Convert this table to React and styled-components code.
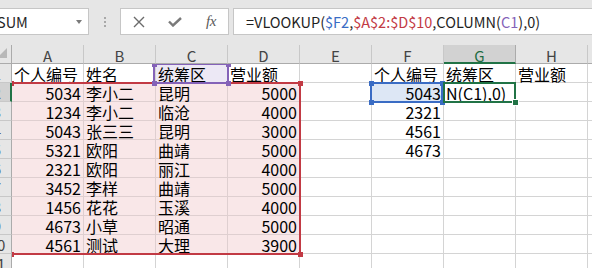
import React from 'react';
import styled, { createGlobalStyle } from 'styled-components';

const Global = createGlobalStyle`
  html, body { margin: 0; padding: 0; background: #fff; }
  body { font-family: "Noto Sans CJK SC", "Liberation Sans", sans-serif; }
`;

const Frame = styled.div`
  width: 592px;
  height: 268px;
  overflow: hidden;
  background: #e6e6e6;
  display: flex;
  flex-direction: column;
`;

const FormulaRow = styled.div`
  height: 45px;
  flex: none;
  box-sizing: border-box;
  padding-top: 8px;
  display: flex;
  align-items: flex-start;
`;

const NameBox = styled.div`
  flex: none;
  margin-left: -11px;
  width: 100px;
  height: 27px;
  box-sizing: border-box;
  background: #fff;
  border: 1px solid #c6c6c6;
  display: flex;
  align-items: center;
  padding: 0 6px 0 7px;
  font-size: 14.5px;
  color: #262626;
`;

const Caret = styled.span`
  margin-left: auto;
  width: 0;
  height: 0;
  border-left: 3.5px solid transparent;
  border-right: 3.5px solid transparent;
  border-top: 4px solid #7a7a7a;
`;

const Grip = styled.div`
  flex: none;
  width: 31px;
  height: 27px;
  display: flex;
  flex-direction: column;
  align-items: center;
  justify-content: center;
  gap: 2px;
`;

const GripDot = styled.span`
  width: 2px;
  height: 2px;
  background: #a8a8a8;
`;

const FxBox = styled.div`
  flex: none;
  width: 109px;
  height: 27px;
  box-sizing: border-box;
  background: #fff;
  border: 1px solid #c6c6c6;
  display: grid;
  grid-template-columns: repeat(3, 36px);
  align-items: center;
  justify-items: center;
`;

const FxLabel = styled.span`
  font-family: "Liberation Serif", "DejaVu Serif", serif;
  font-style: italic;
  font-size: 15px;
  color: #5a5a5a;
  letter-spacing: -0.5px;
`;

const FormulaInput = styled.div`
  flex: none;
  margin-left: 4px;
  width: 420px;
  height: 27px;
  box-sizing: border-box;
  background: #fff;
  border: 1px solid #c6c6c6;
  border-right: none;
  display: flex;
  align-items: center;
  padding-left: 12px;
  font-size: 14.5px;
  color: #1f1f1f;
  white-space: nowrap;
`;

const Ref = styled.span`
  color: ${p => p.$c};
`;

const Sheet = styled.div`
  position: relative;
  flex: none;
  display: grid;
  grid-template-columns: 12px repeat(9, 72px);
  grid-auto-rows: 19px;
  width: 660px;
  background: #fff;
`;

const Corner = styled.div`
  position: relative;
  z-index: 3;
  box-sizing: border-box;
  background: #e6e6e6;
  border-right: 1px solid #ababab;
  border-bottom: 1px solid #ababab;
  overflow: hidden;
`;

const ColHead = styled.div`
  position: relative;
  z-index: 3;
  box-sizing: border-box;
  background: ${p => (p.$active ? '#d2d2d2' : '#e6e6e6')};
  border-right: 1px solid ${p => (p.$active ? '#ababab' : '#c8c8c8')};
  border-bottom: ${p => (p.$active ? '2px solid #217346' : '1px solid #ababab')};
  text-align: center;
  font-size: 15px;
  line-height: 21px;
  color: ${p => (p.$active ? '#1e6b41' : '#444')};
`;

const RowHead = styled.div`
  position: relative;
  z-index: 3;
  box-sizing: border-box;
  background: ${p => (p.$active ? '#d2d2d2' : '#e6e6e6')};
  border-right: ${p => (p.$active ? '2px solid #217346' : '1px solid #ababab')};
  border-bottom: 1px solid #c8c8c8;
  overflow: hidden;
  font-size: 15px;
  line-height: 20px;
  color: #444;
`;

const RowNum = styled.span`
  display: block;
  width: 30px;
  margin-left: -18px;
  text-align: center;
`;

const tints = {
  pink: '#f9e7e8',
  purple: '#ece8f5',
  blue: '#dde7f5',
};

const Cell = styled.div`
  box-sizing: border-box;
  border-right: 1px solid ${p => (p.$tint === 'pink' ? '#dfcfd0' : '#d4d4d4')};
  border-bottom: 1px solid ${p => (p.$tint === 'pink' ? '#dfcfd0' : '#d4d4d4')};
  background: ${p => tints[p.$tint] || '#fff'};
  padding: 0 2px;
  text-align: ${p => (p.$num ? 'right' : 'left')};
  font-size: 16px;
  line-height: 20px;
  color: #000;
  white-space: nowrap;
`;

const RangeBox = styled.div`
  position: absolute;
  z-index: 2;
  box-sizing: border-box;
  border: 2px solid ${p => p.$c};
  pointer-events: none;
`;

const Handle = styled.span`
  position: absolute;
  width: 5px;
  height: 5px;
  background: ${p => p.$c};
  ${p => (p.$v === 't' ? 'top: -3px;' : 'bottom: -4px;')}
  ${p => (p.$h === 'l' ? 'left: -3px;' : 'right: -4px;')}
`;

const FillHandle = styled.span`
  position: absolute;
  right: -4px;
  bottom: -4px;
  width: 5px;
  height: 5px;
  background: #217346;
  box-shadow: 0 0 0 1px #fff;
`;

const cols = ['A', 'B', 'C', 'D', 'E', 'F', 'G', 'H', 'I'];

const data = [
  [5034, '李小二', '昆明', 5000],
  [1234, '李小二', '临沧', 4000],
  [5043, '张三三', '昆明', 3000],
  [5321, '欧阳', '曲靖', 5000],
  [2321, '欧阳', '丽江', 4000],
  [3452, '李样', '曲靖', 5000],
  [1456, '花花', '玉溪', 4000],
  [4673, '小草', '昭通', 5000],
  [4561, '测试', '大理', 3900],
];

const lookup = [5043, 2321, 4561, 4673];

function buildRow(r) {
  const empty = () => ({ v: '' });
  if (r === 1) {
    return [
      { v: '个人编号' },
      { v: '姓名' },
      { v: '统筹区', tint: 'purple' },
      { v: '营业额' },
      empty(),
      { v: '个人编号' },
      { v: '统筹区' },
      { v: '营业额' },
      empty(),
    ];
  }
  if (r >= 2 && r <= 10) {
    const d = data[r - 2];
    const f = r <= 5 ? lookup[r - 2] : '';
    return [
      { v: d[0], num: true, tint: 'pink' },
      { v: d[1], tint: 'pink' },
      { v: d[2], tint: 'pink' },
      { v: d[3], num: true, tint: 'pink' },
      empty(),
      { v: f, num: true, tint: r === 2 ? 'blue' : undefined },
      { v: r === 2 ? 'N(C1),0)' : '' },
      empty(),
      empty(),
    ];
  }
  return cols.map(empty);
}

const CloseIcon = () => (
  <svg width="12" height="12" viewBox="0 0 12 12">
    <path d="M1 1 L11 11 M11 1 L1 11" stroke="#6b6b6b" strokeWidth="1.4" fill="none" />
  </svg>
);

const CheckIcon = () => (
  <svg width="14" height="10" viewBox="0 0 14 10">
    <path d="M1 4.5 L5 8.5 L13 1" stroke="#7a7a7a" strokeWidth="2.4" fill="none" />
  </svg>
);

const SelectAll = () => (
  <svg width="12" height="19" viewBox="0 0 12 19">
    <polygon points="-3,13 7,3 7,13" fill="#b8b8b8" />
  </svg>
);

const corners = [['t', 'l'], ['t', 'r'], ['b', 'l'], ['b', 'r']];

function Range({ c, style, fill }) {
  return (
    <RangeBox $c={c} style={style}>
      {fill
        ? <FillHandle />
        : corners.map(([v, h]) => <Handle key={v + h} $c={c} $v={v} $h={h} />)}
    </RangeBox>
  );
}

export default function App() {
  const rows = Array.from({ length: 11 }, (_, i) => i + 1);
  return (
    <>
      <Global />
      <Frame>
        <FormulaRow>
          <NameBox>
            SUM
            <Caret />
          </NameBox>
          <Grip>
            <GripDot />
            <GripDot />
            <GripDot />
          </Grip>
          <FxBox>
            <CloseIcon />
            <CheckIcon />
            <FxLabel>fx</FxLabel>
          </FxBox>
          <FormulaInput>
            =VLOOKUP(<Ref $c="#3a6cc4">$F2</Ref>,<Ref $c="#c23a44">$A$2:$D$10</Ref>,COLUMN(<Ref $c="#8462b8">C1</Ref>),0)
          </FormulaInput>
        </FormulaRow>
        <Sheet>
          <Corner>
            <SelectAll />
          </Corner>
          {cols.map(c => (
            <ColHead key={c} $active={c === 'G'}>{c}</ColHead>
          ))}
          {rows.map(r => (
            <React.Fragment key={r}>
              <RowHead $active={r === 2}>
                <RowNum>{r}</RowNum>
              </RowHead>
              {buildRow(r).map((cell, i) => (
                <Cell key={i} $num={cell.num} $tint={cell.tint}>{cell.v}</Cell>
              ))}
            </React.Fragment>
          ))}
          <Range c="#c23a44" style={{ left: 10, top: 37, width: 291, height: 173 }} />
          <Range c="#8462b8" style={{ left: 153, top: 18, width: 76, height: 21 }} />
          <Range c="#3a6cc4" style={{ left: 370, top: 37, width: 73, height: 21 }} />
          <Range c="#217346" fill style={{ left: 443, top: 37, width: 73, height: 21 }} />
        </Sheet>
      </Frame>
    </>
  );
}
